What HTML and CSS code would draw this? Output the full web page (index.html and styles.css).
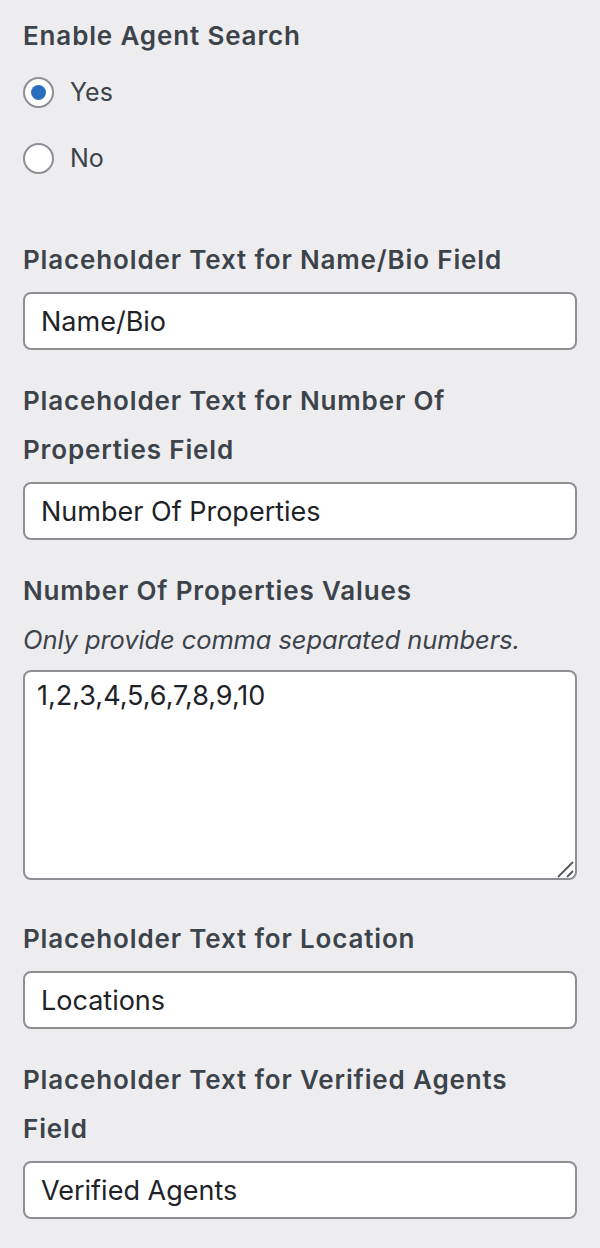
FILE: index.html
```html
<!DOCTYPE html>
<html lang="en">
<head>
<meta charset="utf-8">
<link rel="stylesheet" href="styles.css">
</head>
<body>
<div class="panel">
  <div class="field field-radio">
    <div class="label">Enable Agent Search</div>
    <div class="radios">
      <label class="radio-row"><span class="radio checked"></span><span>Yes</span></label>
      <label class="radio-row"><span class="radio"></span><span>No</span></label>
    </div>
  </div>
  <div class="field">
    <div class="label">Placeholder Text for Name/Bio Field</div>
    <input class="text" type="text" value="Name/Bio">
  </div>
  <div class="field">
    <div class="label">Placeholder Text for Number Of Properties Field</div>
    <input class="text" type="text" value="Number Of Properties">
  </div>
  <div class="field">
    <div class="label">Number Of Properties Values</div>
    <div class="desc">Only provide comma separated numbers.</div>
    <div class="area-wrap">
      <textarea class="area">1,2,3,4,5,6,7,8,9,10</textarea>
      <svg class="grip" width="17" height="17" viewBox="0 0 17 17" aria-hidden="true">
        <line x1="1" y1="16" x2="16" y2="1" stroke="#50555a" stroke-width="1.8"/>
        <line x1="10" y1="16" x2="16" y2="10" stroke="#50555a" stroke-width="1.8"/>
      </svg>
    </div>
  </div>
  <div class="field field-gap">
    <div class="label">Placeholder Text for Location</div>
    <input class="text" type="text" value="Locations">
  </div>
  <div class="field">
    <div class="label">Placeholder Text for Verified Agents Field</div>
    <input class="text" type="text" value="Verified Agents">
  </div>
</div>
</body>
</html>
```

FILE: styles.css
```css
html, body {
  margin: 0;
  padding: 0;
  background: #ededef;
}
body {
  font-family: Inter, "Liberation Sans", sans-serif;
  color: #3c434a;
}
.panel {
  display: flex;
  flex-direction: column;
  gap: 26px;
  padding: 11px 24px 0 23px;
}
.field {
  display: flex;
  flex-direction: column;
}
.field-radio {
  margin-bottom: 27px;
}
.field-gap {
  margin-top: 8px;
}
.label {
  font-size: 26px;
  font-weight: 600;
  line-height: 49px;
  max-width: 520px;
  margin-bottom: 8px;
  letter-spacing: 0.85px;
}
.desc {
  font-size: 25.5px;
  font-style: italic;
  line-height: 34px;
  margin-bottom: 13px;
  letter-spacing: -0.1px;
}
.radios {
  display: flex;
  flex-direction: column;
  gap: 18px;
}
.radio-row {
  display: flex;
  align-items: center;
  height: 48px;
  gap: 16px;
  font-size: 25px;
}
.radio {
  width: 27px;
  height: 27px;
  border: 2px solid #8c8f94;
  border-radius: 50%;
  background: #fff;
  display: flex;
  align-items: center;
  justify-content: center;
}
.radio.checked::after {
  content: "";
  width: 15px;
  height: 15px;
  border-radius: 50%;
  background: #2a6ebb;
}
.text, .area {
  box-sizing: border-box;
  width: 554px;
  border: 2px solid #8c8f94;
  border-radius: 8px;
  background: #fff;
  font-family: Inter, Roboto, sans-serif;
  font-size: 27px;
  color: #1d2327;
  margin: 0;
  outline: none;
}
.text {
  height: 58px;
  padding: 0 16px;
}
.area-wrap {
  position: relative;
  width: 554px;
  height: 210px;
}
.area {
  display: block;
  height: 210px;
  padding: 5px 12px;
  line-height: 37px;
  resize: none;
}
.grip {
  position: absolute;
  right: 3px;
  bottom: 2px;
}
```
